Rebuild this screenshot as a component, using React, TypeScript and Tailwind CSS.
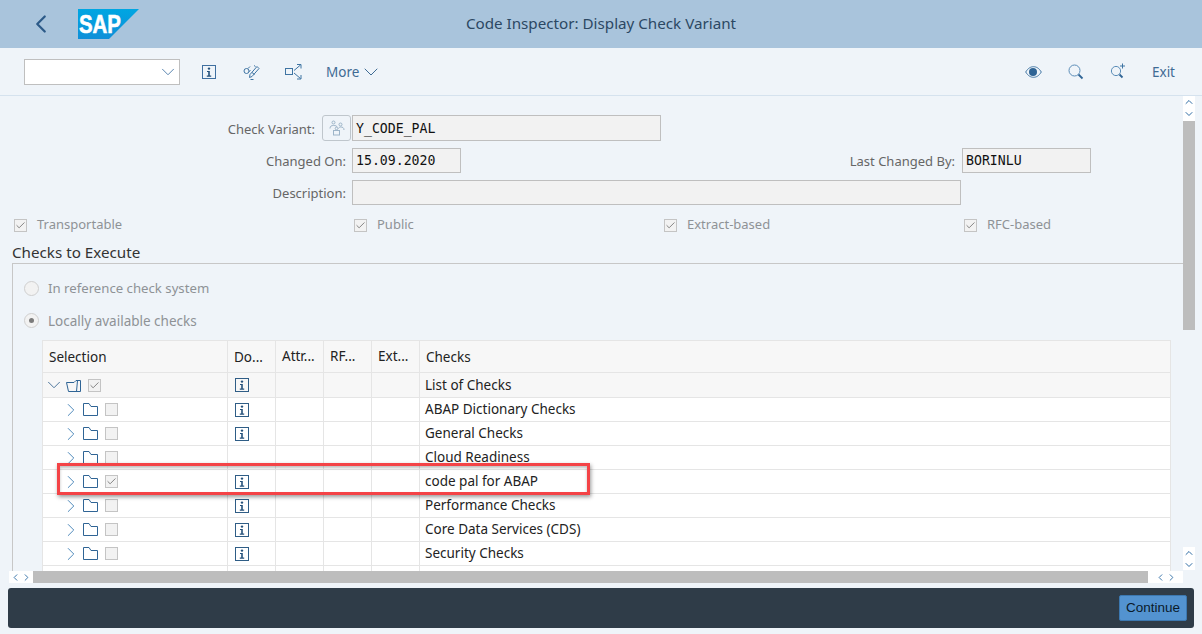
import React from "react";
import { ChevronLeft, ChevronDown, ChevronRight, ChevronUp, Check } from "lucide-react";

/* ---------- icons ---------- */

const InfoIcon = ({ color = "#2f5d86" }: { color?: string }) => (
  <svg width="14" height="14" viewBox="0 0 14 14" fill="none">
    <rect x="0.5" y="0.5" width="13" height="13" stroke={color} />
    <circle cx="7" cy="3.6" r="1.2" fill="#24507a" />
    <path d="M5 6h2.8v4.6H9.2v1.1H4.8v-1.1h1.4V7H5z" fill="#24507a" />
  </svg>
);

const Folder = () => (
  <svg width="15" height="13" viewBox="0 0 15 13" fill="none" stroke="#2f6495">
    <path d="M0.5 12.5V0.5H6L8 3.5H14.5V12.5Z" />
  </svg>
);

const OpenFolder = () => (
  <svg width="15" height="13" viewBox="0 0 15 13" fill="none" stroke="#2f6495">
    <path d="M2.5 12.5L0.5 3.5H8L10 1.5H14.5V12.5Z" />
    <path d="M11.5 1.5L10.5 12.5" />
  </svg>
);

const GlassesPencil = () => (
  <svg width="18" height="18" viewBox="0 0 18 18" fill="none" stroke="#3f74a3">
    <circle cx="3.5" cy="8" r="2.5" />
    <path d="M5 5.5L7 3.5M6 8.5l1.5-1" />
    <path d="M6.5 14.5L7 11.5L14 3.5L16 5.5L9 13.5Z" />
    <path d="M9 9.5l2.5 2M7.5 16.5h3" />
    <path d="M11 2.5l1.5 1" />
  </svg>
);

const Transfer = () => (
  <svg width="18" height="16" viewBox="0 0 18 16" fill="none" stroke="#3f74a3">
    <rect x="0.5" y="4.5" width="7" height="6" />
    <path d="M9 6.5L15.5 1M12 .5h4v4M9 9l6.5 5.5M16 11v4h-4" />
  </svg>
);

const Eye = () => (
  <svg width="17" height="12" viewBox="0 0 17 12" fill="none">
    <path d="M0.7 6C3 2.2 5.6.7 8.5.7S14 2.2 16.3 6C14 9.8 11.4 11.3 8.5 11.3S3 9.8.7 6Z" stroke="#3f74a3" />
    <circle cx="8" cy="6" r="4" fill="#2f6495" />
  </svg>
);

const Search = ({ plus }: { plus?: boolean }) => (
  <svg width="16" height="16" viewBox="0 0 16 16" fill="none">
    <circle cx={plus ? 6 : 6.5} cy={plus ? 8 : 6.5} r={plus ? 4.6 : 5.5} stroke="#5b8db8" />
    <path d={plus ? "M9.5 11.5L12.5 14.5" : "M10.5 10.5L14.5 14.5"} stroke="#2f6495" strokeWidth="1.8" />
    {plus && <path d="M12.5 0.5v5M10 3h5" stroke="#3f74a3" />}
  </svg>
);

const People = () => (
  <svg width="16" height="16" viewBox="0 0 16 16" fill="none" stroke="#9db4c8">
    <circle cx="4.5" cy="2.5" r="1.5" />
    <circle cx="11.5" cy="4.5" r="1.5" />
    <path d="M1 8.5C1 6 2.5 5.5 4.5 5.5S8 6 8 7M9.5 8.5c.5-1 1-1.5 2-1.5 2 0 3.5.5 3.5 3" />
    <rect x="4.5" y="10.5" width="6" height="4.5" />
    <circle cx="7.5" cy="8.5" r="1.3" />
  </svg>
);

const SapLogo = () => (
  <svg width="61" height="30" viewBox="0 0 61 30">
    <defs>
      <linearGradient id="sapBlue" x1="0" y1="0" x2="0" y2="1">
        <stop offset="0" stopColor="#00a6e2" />
        <stop offset="1" stopColor="#0f8fd8" />
      </linearGradient>
    </defs>
    <polygon points="0,0 61,0 31,30 0,30" fill="url(#sapBlue)" />
    <text x="1" y="24" fill="#fff" stroke="#fff" strokeWidth="0.6" fontFamily="'Liberation Sans', sans-serif" fontWeight="700" fontSize="26" textLength="42" lengthAdjust="spacingAndGlyphs">
      SAP
    </text>
  </svg>
);

/* ---------- small controls ---------- */

const ReadOnly = ({ value, className }: { value?: string; className: string }) => (
  <div className={`bg-[#f2f2f2] border border-[#bfbfbf] pl-[3px] font-['DejaVu_Sans_Mono',monospace] text-[13.2px] text-[#111] ${className}`}>
    {value}
  </div>
);

const Box = ({ checked }: { checked?: boolean }) => (
  <span className="w-[13px] h-[13px] bg-[#f2f2f2] border border-[#c4c4c4] flex items-center justify-center shrink-0">
    {checked && <Check size={11} strokeWidth={2} className="text-[#7b7b7b]" />}
  </span>
);

const Flag = ({ label, className }: { label: string; className: string }) => (
  <div className={`flex items-center ${className}`}>
    <Box checked />
    <span className="ml-[10px] text-[#8e9296]">{label}</span>
  </div>
);

const Radio = ({ label, on, textClass }: { label: string; on?: boolean; textClass: string }) => (
  <div className="h-[32px] flex items-center">
    <span className="w-[15px] h-[15px] rounded-full bg-[#f2f2f2] border border-[#cfcfcf] flex items-center justify-center">
      {on && <span className="w-[5px] h-[5px] rounded-full bg-[#7b7b7b]" />}
    </span>
    <span className={`ml-[9px] pt-[2px] text-[#8e9296] ${textClass}`}>{label}</span>
  </div>
);

const ScrollButton = ({ children }: { children: React.ReactNode }) => (
  <span className="flex items-center justify-center text-[#2f6da5]">{children}</span>
);

/* ---------- table ---------- */

const CELL = "border-r border-[#e5e5e5] h-full";

const rows = [
  { name: "ABAP Dictionary Checks", info: true },
  { name: "General Checks", info: true },
  { name: "Cloud Readiness", info: false },
  { name: "code pal for ABAP", info: true, checked: true },
  { name: "Performance Checks", info: true },
  { name: "Core Data Services (CDS)", info: true },
  { name: "Security Checks", info: true },
  { name: "", info: false },
];

const Columns = ({ first, second, last, head }: { first: React.ReactNode; second: React.ReactNode; last: React.ReactNode; head?: string[] }) => (
  <>
    <div className={`${CELL} w-[185px] flex items-center`}>{first}</div>
    <div className={`${CELL} w-[48px] flex items-center pl-[6px]`}>{second}</div>
    {[0, 1, 2].map((i) => (
      <div key={i} className={`${CELL} w-[48px] flex items-center pl-[6px]`}>{head?.[i]}</div>
    ))}
    <div className="flex-1 pl-[5px]">{last}</div>
  </>
);

export default function App() {
  return (
    <div className="w-[1202px] h-[634px] overflow-hidden relative flex flex-col bg-[#eff4f9] font-['Noto_Sans',sans-serif] text-[13px]">
      {/* title bar */}
      <header className="h-[48px] shrink-0 bg-[#a9c4dc] flex items-center relative">
        <ChevronLeft size={30} strokeWidth={1.8} className="ml-[26px] text-[#2c5a88]" />
        <div className="ml-[22px] mt-[-1px]"><SapLogo /></div>
        <div className="absolute inset-x-0 pb-[2px] text-center text-[15.2px] text-[#2c4863]">Code Inspector: Display Check Variant</div>
      </header>

      {/* toolbar */}
      <div className="h-[48px] shrink-0 border-b border-[#d5e2ee] pt-[1px] flex items-center pl-[24px] pr-[27px] text-[#3f6b94] text-[13.5px]">
        <div className="w-[156px] h-[26px] bg-white border border-[#bfbfbf] flex items-center justify-end">
          <ChevronDown size={22} strokeWidth={1} className="text-[#4b7ba8]" />
        </div>
        <div className="ml-[22px]"><InfoIcon color="#3f6fa0" /></div>
        <div className="ml-[27px]"><GlassesPencil /></div>
        <div className="ml-[24px]"><Transfer /></div>
        <span className="ml-[23px]">More</span>
        <ChevronDown size={24} strokeWidth={1} />
        <div className="ml-auto"><Eye /></div>
        <div className="ml-[26px]"><Search /></div>
        <div className="ml-[26px] mt-[-2px]"><Search plus /></div>
        <span className="ml-[26px]">Exit</span>
      </div>

      {/* content */}
      <div className="h-[487px] shrink-0 flex">
        <div className="w-[1183px] overflow-hidden flex flex-col">
          <div className="h-[475px] shrink-0 overflow-hidden pt-[19px] text-[#666]">
            <div className="h-[26px] flex items-center">
              <span className="w-[315px] pt-[3px] text-right">Check Variant:</span>
              <span className="ml-[7px] w-[29px] h-[26px] rounded-[3px] border border-[#bfc6cc] flex items-center justify-center"><People /></span>
              <ReadOnly value="Y_CODE_PAL" className="w-[309px] h-[26px] ml-[1px] leading-[25px]" />
            </div>
            <div className="h-[25px] mt-[7px] flex items-center">
              <span className="w-[346px] pt-[2px] text-right">Changed On:</span>
              <ReadOnly value="15.09.2020" className="ml-[6px] w-[109px] h-[25px] leading-[24px]" />
              <span className="w-[494px] pt-[2px] text-right">Last Changed By:</span>
              <ReadOnly value="BORINLU" className="ml-[7px] w-[129px] h-[25px] leading-[24px]" />
            </div>
            <div className="h-[25px] mt-[7px] flex items-center">
              <span className="w-[346px] pt-[2px] text-right">Description:</span>
              <ReadOnly className="ml-[6px] w-[609px] h-[25px]" />
            </div>
            <div className="h-[20px] mt-[10px] flex items-center">
              <Flag label="Transportable" className="ml-[14px] w-[340px]" />
              <Flag label="Public" className="w-[310px]" />
              <Flag label="Extract-based" className="w-[300px]" />
              <Flag label="RFC-based" className="" />
            </div>
            <div className="mt-[6px] ml-[12px] h-[22px] text-[15.2px] leading-[22px] text-[#333]">Checks to Execute</div>

            {/* group box */}
            <div className="ml-[12px] h-[330px] border-l border-t border-[#c7c7c7] pl-[11px] pt-[8px]">
              <Radio label="In reference check system" textClass="text-[13.2px]" />
              <Radio label="Locally available checks" on textClass="text-[13.5px]" />
              <div className="mt-[4px] ml-[18px] w-[1129px] border-l border-t border-r border-[#e5e5e5] text-[13.5px] text-[#222]">
                <div className="h-[32px] bg-[#f7f7f7] border-b border-[#e5e5e5] flex items-center">
                  <Columns
                    first={<span className="pl-[6px] pt-[2px]">Selection</span>}
                    second={<span className="pt-[2px]">Do...</span>}
                    head={["Attr...", "RF...", "Ext..."]}
                    last={<span className="pl-[1px] pt-[2px] block">Checks</span>}
                  />
                </div>
                <div className="h-[25px] bg-[#f7f7f7] border-b border-[#e5e5e5] flex items-center">
                  <Columns
                    first={
                      <div className="flex items-center">
                        <ChevronDown size={22} strokeWidth={1} className="text-[#3f6b94]" />
                        <span className="ml-[1px]"><OpenFolder /></span>
                        <span className="ml-[7px]"><Box checked /></span>
                      </div>
                    }
                    second={<span className="ml-[1px]"><InfoIcon /></span>}
                    last="List of Checks"
                  />
                </div>
                {rows.map((r, i) => (
                  <div key={i} className="h-[24px] bg-white border-b border-[#e5e5e5] flex items-center">
                    <Columns
                      first={
                        r.name ? (
                          <div className="pl-[17px] flex items-center">
                            <ChevronRight size={22} strokeWidth={1} className="text-[#3f7fb5]" />
                            <span className="ml-[1px]"><Folder /></span>
                            <span className="ml-[7px]"><Box checked={r.checked} /></span>
                          </div>
                        ) : null
                      }
                      second={r.info ? <span className="ml-[1px]"><InfoIcon /></span> : null}
                      last={r.name}
                    />
                  </div>
                ))}
              </div>
            </div>
          </div>

          {/* horizontal scrollbar */}
          <div className="h-[12px] shrink-0 flex ml-[9px]">
            <div className="w-[24px] bg-white flex justify-center">
              <ScrollButton><ChevronLeft size={11} strokeWidth={2} /></ScrollButton>
              <ScrollButton><ChevronRight size={11} strokeWidth={2} /></ScrollButton>
            </div>
            <div className="w-[1115px] bg-[#bdbdbd]" />
            <div className="flex-1 bg-white flex justify-center">
              <ScrollButton><ChevronLeft size={11} strokeWidth={2} /></ScrollButton>
              <ScrollButton><ChevronRight size={11} strokeWidth={2} /></ScrollButton>
            </div>
          </div>
        </div>

        {/* vertical scrollbar */}
        <div className="w-[12px] flex flex-col">
          <div className="h-[25px] bg-white flex flex-col items-center">
            <ScrollButton><ChevronUp size={12} strokeWidth={2} /></ScrollButton>
            <ScrollButton><ChevronDown size={12} strokeWidth={2} /></ScrollButton>
          </div>
          <div className="h-[209px] bg-[#bdbdbd]" />
          <div className="flex-1" />
          <div className="h-[23px] mb-[13px] bg-white flex flex-col items-center">
            <ScrollButton><ChevronUp size={12} strokeWidth={2} /></ScrollButton>
            <ScrollButton><ChevronDown size={12} strokeWidth={2} /></ScrollButton>
          </div>
        </div>
      </div>

      {/* footer */}
      <footer className="mt-[5px] mx-[8px] h-[40px] shrink-0 bg-[#2f3c48] rounded-[3px] flex items-center justify-end pr-[7px]">
        <button className="w-[68px] h-[26px] bg-[#5393d0] border border-[#3c78b0] rounded-[2px] text-[13.5px] text-[#0a1a2a] font-['Liberation_Sans',sans-serif]">Continue</button>
      </footer>

      {/* red highlight drawn over the table */}
      <div className="absolute left-[57px] top-[463px] w-[533px] h-[32px] border-[3px] border-[#f44346] shadow-[1px_2px_4px_rgba(0,0,0,0.4),inset_0_2px_3px_rgba(0,0,0,0.25)]" />
    </div>
  );
}
